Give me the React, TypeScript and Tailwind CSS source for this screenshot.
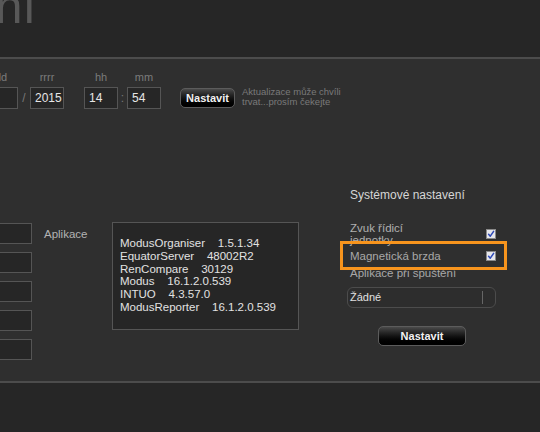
import React from 'react';

const apps = [
  ['ModusOrganiser', '1.5.1.34'],
  ['EquatorServer', '48002R2'],
  ['RenCompare', '30129'],
  ['Modus', '16.1.2.0.539'],
  ['INTUO', '4.3.57.0'],
  ['ModusReporter', '16.1.2.0.539'],
];

function Check() {
  return (
    <svg width="10" height="10" viewBox="0 0 10 10" className="shrink-0">
      <rect x="0.5" y="0.5" width="9" height="9" fill="#e6e6ea" stroke="#8a8a8a" />
      <path d="M2.6 5.2 L4.3 7.2 L7.6 2.4" stroke="#2c48b8" strokeWidth="1.5" fill="none" strokeLinecap="round" strokeLinejoin="round" />
    </svg>
  );
}

function DarkButton({ label, className }: { label: string; className: string }) {
  return (
    <button
      className={
        'flex items-center justify-center rounded-[5px] border border-[#5c5c5c] bg-linear-to-b from-[#4a4a4a] via-[#141414] to-[#000000] text-[11px] font-bold text-[#f2f2f2] ' +
        className
      }
    >
      {label}
    </button>
  );
}

function DateField({ label, value, className = '' }: { label: string; value: string; className?: string }) {
  return (
    <div className={'flex flex-col items-center ' + className}>
      <span className="mb-[3px] text-[11px] leading-[13px] text-[#7b7b7b]">{label}</span>
      <div className="flex h-[22px] w-[34px] items-center border border-[#555555] bg-[#262626] pl-[4px] text-[12px] text-[#e6e6e6]">
        {value}
      </div>
    </div>
  );
}

export default function App() {
  return (
    <div className="h-[432px] w-[540px] overflow-hidden bg-[#262626] font-['Liberation_Sans',Arial,sans-serif]">
      {/* header */}
      <div className="h-[57px] overflow-hidden">
        <div className="flex w-[36px] justify-end overflow-hidden">
          <span className="-mt-[18px] whitespace-nowrap text-[49px] leading-none text-[#585858]">Nastavení</span>
        </div>
      </div>
      <div className="h-[2px] bg-[#4c4c4c]" />

      {/* body */}
      <div className="h-[322px] bg-[#2f2f2f] pt-[12px]">
        {/* date row */}
        <div className="flex items-end">
          <DateField label="dd" value="" className="-ml-[16px]" />
          <span className="flex h-[22px] w-[12px] items-center justify-center text-[12px] text-[#777777]">/</span>
          <DateField label="rrrr" value="2015" />
          <div className="w-[20px]" />
          <DateField label="hh" value="14" />
          <span className="flex h-[22px] w-[9px] items-center justify-center text-[12px] text-[#777777]">:</span>
          <DateField label="mm" value="54" />
          <div className="ml-[19px] flex h-[22px] items-center self-end">
            <DarkButton label="Nastavit" className="h-[20px] w-[55px]" />
          </div>
          <div className="mb-[2px] ml-[7px] text-[9.5px] leading-[10px] text-[#7a7a7a]">
            <div>Aktualizace může chvíli</div>
            <div>trvat...prosím čekejte</div>
          </div>
        </div>

        {/* lower section */}
        <div className="flex items-start">
          <div className="mt-[113px] flex items-start">
            <div className="-ml-[88px] mt-[1px] flex flex-col gap-[8px]">
              {[0, 1, 2, 3, 4].map((i) => (
                <div key={i} className="h-[21px] w-[120px] border border-[#555555] bg-[#262626]" />
              ))}
            </div>
            <div className="ml-[12px] mt-[5px] w-[68px] text-[11.5px] leading-[14px] text-[#b3b3b3]">Aplikace</div>
            <div className="h-[108px] w-[187px] border border-[#555555] bg-[#262626] pl-[7px] pt-[14px] text-[11.5px] leading-[12.8px] text-[#e2e2e2]">
              {apps.map(([name, ver]) => (
                <div key={name} className="whitespace-pre">
                  {name}    {ver}
                </div>
              ))}
            </div>
          </div>

          {/* system settings */}
          <div className="ml-[51px] mt-[79px] w-[146px]">
            <div className="text-[12px] leading-[14px] text-[#d6d6d6]">Systémové nastavení</div>
            <div className="mt-[20px] flex items-center justify-between">
              <span className="w-[80px] text-[11.5px] leading-[12px] text-[#b0b0b0]">Zvuk řídicí jednotky</span>
              <Check />
            </div>
            <div className="relative mt-[4px] flex items-center justify-between">
              <span className="text-[11.5px] leading-[12px] text-[#a8a8a8]">Magnetická brzda</span>
              <Check />
              <div className="pointer-events-none absolute -left-[10px] -top-[9px] h-[29px] w-[167px] border-[3px] border-[#f7941d]" />
            </div>
            <div className="mt-[5px] text-[11.5px] leading-[12px] text-[#a8a8a8]">Aplikace při spuštění</div>
            <div className="-ml-[3px] mt-[8px] flex h-[21px] w-[149px] items-center rounded-[6px] border border-[#4c4c4c] bg-[#2d2d2d] pl-[2px] pr-[12px]">
              <span className="flex-1 text-[11px] text-[#e0e0e0]">Žádné</span>
              <span className="h-[13px] w-px bg-[#666666]" />
            </div>
            <DarkButton label="Nastavit" className="ml-[28px] mt-[18px] h-[20px] w-[88px]" />
          </div>
        </div>
      </div>
      <div className="h-[2px] bg-[#4c4c4c]" />
    </div>
  );
}
